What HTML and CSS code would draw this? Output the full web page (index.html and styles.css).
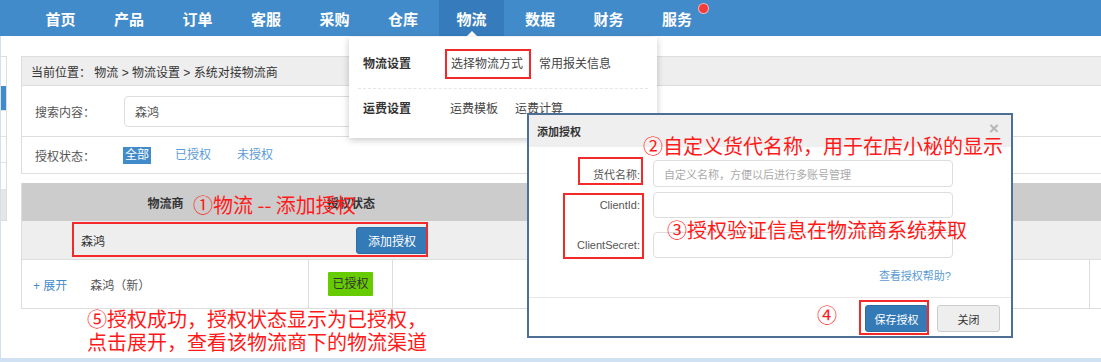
FILE: index.html
```html
<!DOCTYPE html>
<html lang="zh-CN">
<head>
<meta charset="utf-8">
<title>系统对接物流商</title>
<link rel="stylesheet" href="styles.css">
</head>
<body>
<div class="page">
  <nav class="topnav">
    <a class="nav-item">首页</a>
    <a class="nav-item">产品</a>
    <a class="nav-item">订单</a>
    <a class="nav-item">客服</a>
    <a class="nav-item">采购</a>
    <a class="nav-item">仓库</a>
    <a class="nav-item active">物流<span class="caret"></span></a>
    <a class="nav-item">数据</a>
    <a class="nav-item">财务</a>
    <a class="nav-item">服务<span class="dot"></span></a>
  </nav>

  <div class="main">
    <aside class="sidebar">
      <div class="side-item s1"></div>
      <div class="side-item s2 on"></div>
      <div class="side-item s3"></div>
      <div class="side-item s4"></div>
      <div class="side-item s5"></div>
      <div class="side-item s6 gray"></div>
    </aside>

    <section class="content">
      <div class="panel">
        <div class="crumb">当前位置：&nbsp;物流 &gt; 物流设置 &gt; 系统对接物流商</div>
        <div class="prow search-row">
          <span class="plabel">搜索内容：</span>
          <div class="sinput">森鸿</div>
        </div>
        <div class="prow status-row">
          <span class="plabel">授权状态：</span>
          <span class="tag on">全部</span>
          <span class="tag">已授权</span>
          <span class="tag">未授权</span>
        </div>
      </div>

      <div class="table">
        <div class="thead">
          <div class="c1">物流商</div>
          <div class="c2">授权状态</div>
          <div class="c3"></div>
        </div>
        <div class="addrow">
          <div class="addbox">
            <span class="addname">森鸿</span>
            <span class="btn btn-blue addbtn">添加授权</span>
          </div>
        </div>
        <div class="trow">
          <div class="c1 cell-left"><a class="expand">+ 展开</a><span>森鸿（新）</span></div>
          <div class="c2 cell-mid"><span class="ok">已授权</span></div>
          <div class="c3 cell-wide"></div>
          <div class="c4"></div>
        </div>
      </div>
    </section>
  </div>

  <div class="bottom-strip"></div>

  <div class="dropdown">
    <div class="dd-row">
      <span class="dd-title">物流设置</span>
      <div class="dd-links"><span>选择物流方式</span><span>常用报关信息</span></div>
    </div>
    <div class="dd-row dd-row2">
      <span class="dd-title">运费设置</span>
      <div class="dd-links"><span>运费模板</span><span>运费计算</span></div>
    </div>
  </div>

  <div class="dialog">
    <div class="dlg-head">添加授权<span class="dlg-close">×</span></div>
    <div class="dlg-body">
      <div class="frow f1"><label class="flabel">货代名称:</label><div class="finput ph">自定义名称，方便以后进行多账号管理</div></div>
      <div class="frow f2"><label class="flabel">ClientId:</label><div class="finput"></div></div>
      <div class="frow f3"><label class="flabel">ClientSecret:</label><div class="finput"></div></div>
      <div class="help"><a>查看授权帮助?</a></div>
    </div>
    <div class="dlg-foot">
      <span class="btn btn-blue save">保存授权</span>
      <span class="btn btn-gray close">关闭</span>
    </div>
  </div>

  <div class="redbox rb-menu"></div>
  <div class="redbox rb-add"></div>
  <div class="redbox rb-name"></div>
  <div class="redbox rb-client"></div>
  <div class="redbox rb-save"></div>

  <div class="note n1">①物流 -- 添加授权</div>
  <div class="note n2">②自定义货代名称，用于在店小秘的显示</div>
  <div class="note n3">③授权验证信息在物流商系统获取</div>
  <div class="note n4">④</div>
  <div class="note n5">⑤授权成功，授权状态显示为已授权，<br>点击展开，查看该物流商下的物流渠道</div>
</div>
</body>
</html>
```

FILE: styles.css
```css
* { box-sizing: border-box; margin: 0; padding: 0; }
html, body { width: 1101px; height: 362px; overflow: hidden; background: #fff; }
body { font-family: "Liberation Sans", "Noto Sans CJK SC", sans-serif; font-size: 12px; color: #333; }

.page { position: relative; width: 1101px; height: 362px; display: flex; flex-direction: column; padding-left: 1px; }
.page::before { content: ""; position: absolute; left: 0; top: 36px; bottom: 0; width: 1px; background: #cfe1f3; }

/* top nav */
.topnav { height: 36px; flex: none; background: #428bca; display: flex; gap: 3.5px; padding-left: 28px; margin-left: -1px; }
.nav-item { position: relative; width: 65px; height: 36px; display: flex; align-items: center; justify-content: center; color: #fff; font-weight: bold; font-size: 15px; }
.nav-item.active { background: #367cbd; }
.caret { position: absolute; left: 50%; bottom: 0; margin-left: -5px; width: 0; height: 0; border-left: 5px solid transparent; border-right: 5px solid transparent; border-bottom: 5px solid #fff; }
.dot { position: absolute; left: 54px; top: 4px; width: 9px; height: 9px; border-radius: 50%; background: #f43c3c; box-shadow: 0 0 0 1px #f9b3b3; }

/* main */
.main { flex: 1; display: flex; align-items: flex-start; padding-top: 20px; }
.sidebar { width: 6px; flex: none; border: 1px solid #ddd; border-left: 0; }
.side-item { border-bottom: 1px solid #e3e3e3; }
.side-item:last-child { border-bottom: 0; }
.s1 { height: 29px; border-bottom: 0; }
.s2 { height: 25px; }
.s3 { height: 26px; }
.s4 { height: 26px; }
.s5 { height: 27px; }
.s6 { height: 30px; }
.side-item.on { background: #428bca; }
.side-item.gray { background: #e6e6e6; }

.content { flex: 1; margin-left: 14px; min-width: 0; }

.panel { border: 1px solid #ddd; border-right: 0; }
.crumb { height: 29px; background: #eee; border-bottom: 1px solid #ddd; padding-left: 9px; display: flex; align-items: center; font-size: 12px; color: #333; }
.prow { display: flex; align-items: center; padding-left: 13px; }
.search-row { height: 51px; border-bottom: 1px solid #ddd; }
.status-row { height: 36px; }
.plabel { width: 89px; font-size: 12px; color: #555; flex: none; }
.status-row .plabel { width: 88px; }
.sinput { width: 522px; height: 31px; border: 1px solid #ddd; border-radius: 4px; padding-left: 10px; display: flex; align-items: center; font-size: 12px; color: #555; }
.tag { padding: 0 2px; line-height: 17px; margin-right: 22px; color: #5b9bd5; font-size: 12px; }
.tag.on { background: #428bca; color: #fff; }

.table { margin-top: 9px; border-left: 1px solid #ddd; }
.thead { height: 38px; background: #ccc; display: flex; font-weight: bold; color: #333; }
.thead > div { display: flex; align-items: center; justify-content: center; }
.c1 { width: 287px; flex: none; }
.c2 { width: 84px; flex: none; }
.c3 { width: 697px; flex: none; }
.c4 { flex: 1; }
.addrow { height: 39px; background: #eee; border-bottom: 1px solid #ddd; display: flex; align-items: center; padding-left: 50px; }
.addbox { width: 356px; display: flex; justify-content: space-between; align-items: center; padding-left: 9px; }
.addname { font-size: 12px; color: #333; }
.btn { display: inline-flex; align-items: center; justify-content: center; border-radius: 3px; }
.btn-blue { background: #337ab7; color: #fff; border: 1px solid #2e6da4; }
.btn-gray { background: #eee; color: #333; border: 1px solid #ccc; }
.addbtn { width: 72px; height: 27px; font-size: 12px; }
.trow { height: 49px; border-bottom: 1px solid #ddd; display: flex; }
.trow > div { height: 100%; border-right: 1px solid #ddd; display: flex; align-items: center; }
.trow > .c4 { border-right: 0; }
.cell-left { padding-left: 11px; color: #555; }
.expand { color: #428bca; margin-right: 23px; }
.cell-mid { justify-content: center; }
.ok { background: #66cc00; color: #333; line-height: 24px; padding: 0 4px; border-radius: 1px; }

.bottom-strip { height: 4px; flex: none; background: #cfe1f3; margin-left: -1px; }

/* dropdown overlay */
.dropdown { position: absolute; left: 349px; top: 37px; width: 308px; height: 101px; background: #fff; box-shadow: 0 2px 7px rgba(0,0,0,.22); padding: 0 9px; }
.dd-row { height: 51px; display: flex; align-items: center; padding-left: 5px; }
.dd-row2 { height: 37px; border-top: 1px dashed #e6e6e6; }
.dd-title { width: 88px; font-weight: bold; color: #333; }
.dd-links { display: flex; gap: 16px; color: #444; }
.dd-row2 .dd-title { width: 87px; }
.dd-row2 .dd-links { gap: 17px; }

/* dialog overlay */
.dialog { position: absolute; left: 527px; top: 113px; width: 486px; height: 225px; border: 2px solid #4d6f96; background: #fff; display: flex; flex-direction: column; }
.dlg-head { position: relative; height: 32px; flex: none; background: #efefef; padding-left: 8px; display: flex; align-items: center; font-size: 11px; font-weight: bold; color: #333; }
.dlg-close { position: absolute; right: 12px; top: 4px; color: #b5b5b5; font-size: 17px; font-weight: bold; }
.dlg-body { height: 150px; flex: none; padding-top: 13px; }
.frow { display: flex; align-items: center; }
.flabel { width: 111px; text-align: right; font-size: 11px; color: #555; margin-right: 13px; }
.finput { width: 300px; height: 26px; border: 1px solid #ddd; border-radius: 4px; display: flex; align-items: center; padding-left: 10px; font-size: 11px; }
.f1 .finput { height: 27px; }
.f2 { margin-top: 5px; }
.f3 { margin-top: 14px; }
.ph { color: #aaa; }
.help { text-align: right; padding-right: 60px; margin-top: 11px; font-size: 11px; line-height: 14px; }
.help a { color: #5b9bd5; }
.dlg-foot { flex: 1; border-top: 1px solid #e8e8e8; display: flex; justify-content: flex-end; align-items: flex-start; gap: 9px; padding: 7px 11px 0 0; }
.dlg-foot .btn { height: 27px; font-size: 11px; }
.save { width: 63px; }
.close { width: 63px; }

/* annotations */
.redbox { position: absolute; border: 2px solid #f42a2a; }
.rb-menu { left: 445px; top: 49px; width: 86px; height: 30px; }
.rb-add { left: 72px; top: 222px; width: 356px; height: 35px; }
.rb-name { left: 578px; top: 157px; width: 65px; height: 28px; }
.rb-client { left: 563px; top: 193px; width: 81px; height: 66px; }
.rb-save { left: 859px; top: 300px; width: 70px; height: 35px; }

.note { position: absolute; color: #ff1a1a; font-family: "Noto Sans CJK SC", sans-serif; font-size: 20px; line-height: 24px; white-space: nowrap; }
.n1 { left: 193px; top: 193px; }
.n2 { left: 643px; top: 134px; }
.n3 { left: 667px; top: 218px; }
.n4 { left: 817px; top: 303px; }
.n5 { left: 87px; top: 307px; line-height: 23px; }
```
